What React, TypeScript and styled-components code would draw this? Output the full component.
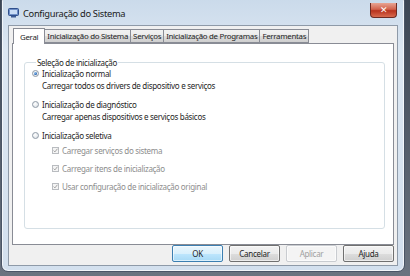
import React from "react";
import styled, { createGlobalStyle } from "styled-components";

const GlobalStyle = createGlobalStyle`
  html, body {
    margin: 0;
    padding: 0;
    background: #5d6670;
    font-family: "Noto Sans", "Open Sans", sans-serif;
    font-size: 8px;
    letter-spacing: -0.3px;
    color: #1e1e1e;
  }
`;

const Screen = styled.div`
  width: 410px;
  height: 276px;
  overflow: hidden;
  background: linear-gradient(180deg, #3c4654 0%, #6b7480 100%);
  padding: 0 5px 4px 1px;
  box-sizing: border-box;
  display: flex;
`;

const Window = styled.div`
  flex: 1;
  margin-top: -6px;
  border: 1px solid #4a5566;
  border-radius: 7px;
  background: linear-gradient(180deg, #c9d9ea 0%, #dce7f2 20%, #d3e0ee 100%);
  box-shadow: inset 0 0 0 1px rgba(255, 255, 255, 0.7);
  display: flex;
  flex-direction: column;
  padding: 0 6px 5px 6px;
`;

const TitleBar = styled.div`
  height: 31px;
  display: flex;
  align-items: center;
  padding-top: 6px;
  box-sizing: border-box;
  position: relative;
`;

const TitleText = styled.span`
  font-size: 9.3px;
  color: #1a1a1a;
  margin-left: 4px;
`;

const CloseButton = styled.div`
  position: absolute;
  right: 1px;
  top: 8px;
  width: 27px;
  height: 15px;
  border: 1px solid #6d2a22;
  border-top: none;
  border-radius: 0 0 4px 4px;
  background: linear-gradient(180deg, #e8a493 0%, #d2624c 45%, #b8331e 55%, #d86a4e 100%);
  box-sizing: border-box;
  display: flex;
  align-items: center;
  justify-content: center;
  color: #fff;
  font-size: 9px;
  font-weight: 700;
  font-family: "DejaVu Sans", sans-serif;
`;

const Client = styled.div`
  flex: 1;
  background: #f0f0f0;
  border: 1px solid #8e9aa8;
  display: flex;
  flex-direction: column;
  padding: 2px 3px 3px 3px;
`;

const TabStrip = styled.div`
  display: flex;
  align-items: flex-end;
  height: 15px;
  padding-left: 1px;
  position: relative;
  z-index: 1;
`;

const Tab = styled.div<{ $active?: boolean }>`
  height: ${(p) => (p.$active ? 16 : 14)}px;
  margin-bottom: ${(p) => (p.$active ? -1 : 0)}px;
  margin-left: ${(p) => (p.$active ? 0 : -1)}px;
  padding: 0 ${(p) => (p.$active ? 6 : 2)}px;
  display: flex;
  align-items: center;
  border: 1px solid #898c95;
  border-bottom: ${(p) => (p.$active ? "none" : "1px solid #898c95")};
  background: ${(p) =>
    p.$active ? "#ffffff" : "linear-gradient(180deg, #f2f2f2 0%, #ebebeb 50%, #dcdcdc 51%, #cfcfcf 100%)"};
  box-sizing: border-box;
  white-space: nowrap;
  font-size: 7.9px;
  color: #1e1e1e;
  &:first-child {
    margin-left: 0;
  }
`;

const Panel = styled.div`
  height: 202px;
  background: #ffffff;
  border: 1px solid #898c95;
  padding: 13px 8px 0 11px;
  box-sizing: border-box;
`;

const GroupBox = styled.fieldset`
  margin: 0;
  height: 172px;
  border: 1px solid #d5dfe5;
  border-radius: 3px;
  padding: 0 0 0 7px;
  box-sizing: border-box;
`;

const Legend = styled.legend`
  padding: 0 1px;
  margin-left: 4px;
  color: #1e1e1e;
`;

const OptionRow = styled.div<{ $top: number; $indent?: number; $disabled?: boolean }>`
  display: flex;
  align-items: center;
  gap: 3px;
  margin-top: ${(p) => p.$top}px;
  margin-left: ${(p) => p.$indent ?? 0}px;
  height: 10px;
  color: ${(p) => (p.$disabled ? "#8d8d8d" : "#1e1e1e")};
`;

const SubText = styled.div`
  margin-top: 3px;
  margin-left: 10px;
  height: 10px;
  line-height: 10px;
`;

const Radio = styled.span<{ $checked?: boolean }>`
  width: 7px;
  height: 7px;
  border-radius: 50%;
  border: 1px solid #8f9aa6;
  background: radial-gradient(circle at 40% 35%, #ffffff 0%, #e3e7eb 70%, #cfd5db 100%);
  box-sizing: border-box;
  display: flex;
  align-items: center;
  justify-content: center;
  &::after {
    content: "";
    display: ${(p) => (p.$checked ? "block" : "none")};
    width: 3px;
    height: 3px;
    border-radius: 50%;
    background: radial-gradient(circle at 35% 35%, #9fd0f5 0%, #2a68b8 60%, #1b4f96 100%);
  }
`;

const Check = styled.span`
  width: 7px;
  height: 7px;
  border: 1px solid #b9bcc0;
  background: #f4f4f4;
  box-sizing: border-box;
  display: flex;
  align-items: center;
  justify-content: center;
`;

const ButtonRow = styled.div`
  flex: 1;
  display: flex;
  justify-content: flex-end;
  align-items: center;
  gap: 6px;
`;

const Button = styled.div<{ $default?: boolean; $disabled?: boolean }>`
  width: 51px;
  height: 17px;
  box-sizing: border-box;
  border: 1px solid ${(p) => (p.$default ? "#3c7fb1" : p.$disabled ? "#c9ccd0" : "#707070")};
  border-radius: 2px;
  background: ${(p) =>
    p.$default
      ? "linear-gradient(180deg, #eaf6fd 0%, #d9f0fc 50%, #bee6fd 51%, #a7d9f5 100%)"
      : p.$disabled
      ? "#f4f4f4"
      : "linear-gradient(180deg, #f2f2f2 0%, #ebebeb 50%, #dddddd 51%, #cfcfcf 100%)"};
  box-shadow: inset 0 0 0 1px rgba(255, 255, 255, 0.6);
  display: flex;
  align-items: center;
  justify-content: center;
  color: ${(p) => (p.$disabled ? "#a0a0a0" : "#1e1e1e")};
`;

const AppIcon = () => (
  <svg width="11" height="10" viewBox="0 0 11 10">
    <rect x="0.5" y="0.5" width="10" height="7" rx="1" fill="#6f8fc7" stroke="#2f4f8c" />
    <rect x="2" y="2" width="7" height="4" fill="#c9dcf5" />
    <rect x="3" y="8" width="5" height="1.5" fill="#3d5a94" />
  </svg>
);

const CheckMark = () => (
  <svg width="5" height="5" viewBox="0 0 5 5">
    <path d="M0.6 2.6 L1.9 3.9 L4.4 0.8" fill="none" stroke="#9a9a9a" strokeWidth="0.9" />
  </svg>
);

export default function App() {
  return (
    <>
      <GlobalStyle />
      <Screen>
        <Window>
          <TitleBar>
            <AppIcon />
            <TitleText>Configuração do Sistema</TitleText>
            <CloseButton>✕</CloseButton>
          </TitleBar>
          <Client>
            <TabStrip>
              <Tab $active>Geral</Tab>
              <Tab>Inicialização do Sistema</Tab>
              <Tab>Serviços</Tab>
              <Tab>Inicialização de Programas</Tab>
              <Tab>Ferramentas</Tab>
            </TabStrip>
            <Panel>
              <GroupBox>
                <Legend>Seleção de inicialização</Legend>
                <OptionRow $top={0}>
                  <Radio $checked />
                  Inicialização normal
                </OptionRow>
                <SubText>Carregar todos os drivers de dispositivo e serviços</SubText>
                <OptionRow $top={8}>
                  <Radio />
                  Inicialização de diagnóstico
                </OptionRow>
                <SubText>Carregar apenas dispositivos e serviços básicos</SubText>
                <OptionRow $top={8}>
                  <Radio />
                  Inicialização seletiva
                </OptionRow>
                <OptionRow $top={5} $indent={20} $disabled>
                  <Check>
                    <CheckMark />
                  </Check>
                  Carregar serviços do sistema
                </OptionRow>
                <OptionRow $top={8} $indent={20} $disabled>
                  <Check>
                    <CheckMark />
                  </Check>
                  Carregar itens de inicialização
                </OptionRow>
                <OptionRow $top={8} $indent={20} $disabled>
                  <Check>
                    <CheckMark />
                  </Check>
                  Usar configuração de inicialização original
                </OptionRow>
              </GroupBox>
            </Panel>
            <ButtonRow>
              <Button $default>OK</Button>
              <Button>Cancelar</Button>
              <Button $disabled>Aplicar</Button>
              <Button>Ajuda</Button>
            </ButtonRow>
          </Client>
        </Window>
      </Screen>
    </>
  );
}
